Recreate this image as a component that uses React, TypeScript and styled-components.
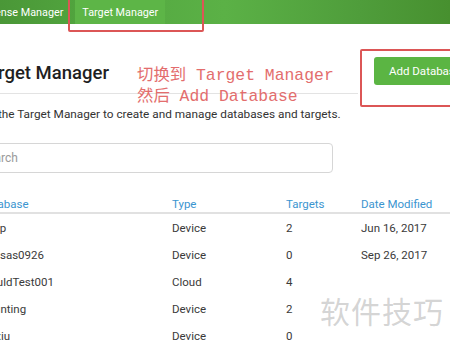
import React from "react";
import styled, { createGlobalStyle } from "styled-components";

type Row = {
  name: string;
  type: string;
  targets: number;
  modified: string;
};

const rows: Row[] = [
  { name: "Shop", type: "Device", targets: 2, modified: "Jun 16, 2017" },
  { name: "Kousas0926", type: "Device", targets: 0, modified: "Sep 26, 2017" },
  { name: "ClouldTest001", type: "Cloud", targets: 4, modified: "" },
  { name: "Counting", type: "Device", targets: 2, modified: "" },
  { name: "Liuxiu", type: "Device", targets: 0, modified: "" },
];

const App: React.FC = () => {
  return (
    <Page>
      <GlobalStyle />
      <NavBar>
        <NavTab>License Manager</NavTab>
        <NavTab active>Target Manager</NavTab>
        <TabMark />
      </NavBar>

      <Main>
        <TitleRow>
          <TitleBlock>
            <Title>Target Manager</Title>
          </TitleBlock>
          <ButtonWrap>
            <AddButton>Add Database</AddButton>
            <ButtonMark />
          </ButtonWrap>
        </TitleRow>

        <Intro>Use the Target Manager to create and manage databases and targets.</Intro>

        <SearchField placeholder="Search" />

        <Table>
          <HeadCell>Database</HeadCell>
          <HeadCell>Type</HeadCell>
          <HeadCell>Targets</HeadCell>
          <HeadCell>Date Modified</HeadCell>
          {rows.map((row) => (
            <React.Fragment key={row.name}>
              <Cell>{row.name}</Cell>
              <Cell>{row.type}</Cell>
              <Cell>{row.targets}</Cell>
              <Cell>{row.modified}</Cell>
            </React.Fragment>
          ))}
        </Table>
      </Main>

      {/* 截图上的标注 */}
      <Note>
        切换到 Target Manager
        <br />
        然后 Add Database
      </Note>
      <Watermark>软件技巧</Watermark>
    </Page>
  );
};

export default App;

const GlobalStyle = createGlobalStyle`
  html, body {
    margin: 0;
    padding: 0;
    background: #fff;
  }

  body {
    font-family: Roboto, "Liberation Sans", "Noto Sans CJK SC", sans-serif;
    color: #333;
  }
`;

// 整个页面
const Page = styled.div`
  position: relative;
  width: 450px;
  height: 342px;
  overflow: hidden;
  background: #fff;
`;

// 顶部绿色导航
const NavBar = styled.nav`
  position: relative;
  height: 24px;
  display: flex;
  align-items: stretch;
  gap: 5px;
  background: linear-gradient(
    to right,
    #4a9737 0%,
    #53a740 22%,
    #5bb146 50%,
    #4f9d3b 80%,
    #47902f 100%
  );
`;

const NavTab = styled.div<{ active?: boolean }>`
  display: flex;
  align-items: center;
  padding: 0 7px;
  font-size: 10.8px;
  color: #fff;
  white-space: nowrap;
  background: ${(props) => (props.active ? "#5db547" : "transparent")};

  &:first-child {
    margin-left: -26px;
  }
`;

// 红框标注
const TabMark = styled.div`
  position: absolute;
  left: 68px;
  top: -4px;
  width: 132px;
  height: 32px;
  border: 2px solid #dc5656;
  border-radius: 2px;
`;

const Main = styled.main`
  margin-left: -20px;
  padding-top: 33px;
`;

const TitleRow = styled.div`
  display: flex;
  align-items: flex-start;
`;

const TitleBlock = styled.div`
  flex: 1;
  margin-right: 16px;
  padding: 6px 0 10px;
  border-bottom: 1px solid #e3e3e3;
`;

const Title = styled.h1`
  margin: 0 0 0 -2px;
  font-size: 18.5px;
  line-height: 20px;
  font-weight: 500;
  color: #1f1f1f;
`;

const ButtonWrap = styled.div`
  position: relative;
  flex-shrink: 0;
  margin-right: -27px;
`;

const AddButton = styled.button`
  height: 28px;
  width: 103px;
  padding: 0 15px;
  border: none;
  border-radius: 3px;
  background: #5bb543;
  color: #fff;
  font-family: Roboto, "Liberation Sans", sans-serif;
  font-size: 11.5px;
  text-align: left;
  white-space: nowrap;
`;

const ButtonMark = styled.div`
  position: absolute;
  left: -14px;
  top: -8px;
  width: 130px;
  height: 54px;
  border: 2px solid #dc5656;
  border-radius: 2px;
`;

const Intro = styled.p`
  margin: 12px 0 0 -5px;
  font-size: 11.8px;
  line-height: 16px;
  color: #333;
  white-space: nowrap;
`;

const SearchField = styled.input`
  display: block;
  box-sizing: border-box;
  margin: 21px 0 0 -10px;
  width: 363px;
  height: 30px;
  padding: 0 10px;
  border: 1px solid #d6d6d6;
  border-radius: 4px;
  font-family: Roboto, "Liberation Sans", sans-serif;
  font-size: 12px;
  color: #333;

  &::placeholder {
    color: #9a9a9a;
  }
`;

const Table = styled.div`
  display: grid;
  grid-template-columns: 192px 114px 75px 1fr;
  margin-top: 17px;
`;

const HeadCell = styled.div`
  padding: 7px 0 0;
  height: 15px;
  font-size: 11.5px;
  line-height: 14px;
  color: #3b95d0;
  border-bottom: 2px solid #e1e1e1;
  white-space: nowrap;
`;

const Cell = styled.div`
  height: 27px;
  display: flex;
  align-items: center;
  font-size: 11.5px;
  color: #3a3a3a;
  white-space: nowrap;
`;

const Note = styled.div`
  position: absolute;
  left: 137px;
  top: 65px;
  font-family: "Liberation Mono", "Noto Sans CJK SC", monospace;
  font-size: 16.4px;
  line-height: 21px;
  color: #e36d6d;
  white-space: nowrap;
`;

const Watermark = styled.div`
  position: absolute;
  left: 320px;
  top: 288px;
  font-family: "Noto Sans CJK SC", sans-serif;
  font-size: 30px;
  letter-spacing: 1px;
  color: rgba(160, 160, 160, 0.45);
  white-space: nowrap;
`;
